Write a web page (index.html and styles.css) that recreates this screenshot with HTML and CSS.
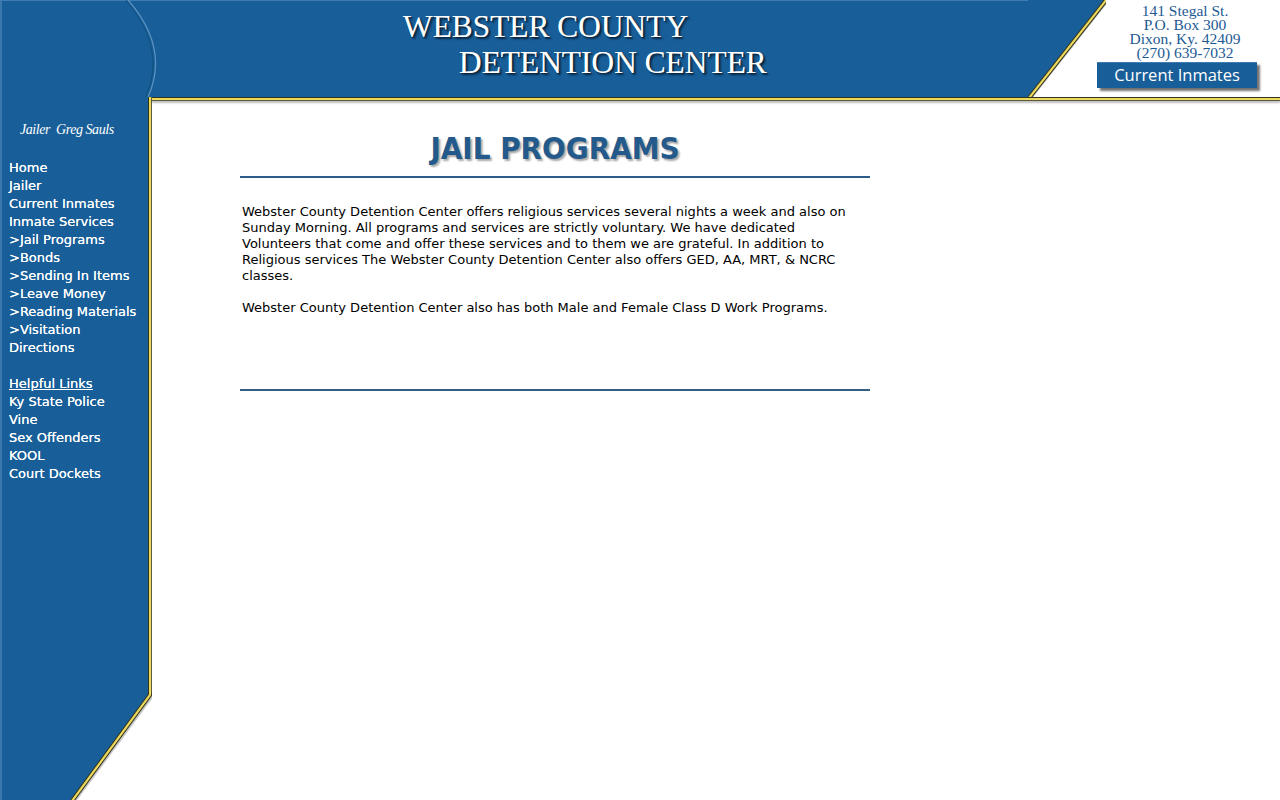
FILE: index.html
```html
<!DOCTYPE html>
<html lang="en">
<head>
<meta charset="utf-8">
<title>Webster County Detention Center - Jail Programs</title>
<link rel="stylesheet" href="styles.css">
</head>
<body>
<div class="page">
  <header class="header">
    <div class="brand">
      <svg class="arc" width="160" height="97" viewBox="0 0 160 97" aria-hidden="true">
        <path d="M128,0 Q170,48 148,97" fill="none" stroke="#5d93c2" stroke-width="1.2"/>
        <path d="M126,0 Q167,48 146,97" fill="none" stroke="#12507f" stroke-width="1"/>
      </svg>
      <h1 class="site-title"><span class="l1">WEBSTER COUNTY</span><span class="l2">DETENTION CENTER</span></h1>
    </div>
    <svg class="slant" width="78" height="97" viewBox="0 0 78 97" aria-hidden="true">
      <polygon points="0,0 79,0 0,98" fill="#185e98"/>
      <line x1="81" y1="-1" x2="3" y2="98" stroke="rgba(0,0,0,0.22)" stroke-width="2.5"/>
      <line x1="79" y1="-1" x2="1" y2="98" stroke="#34331f" stroke-width="4.2"/>
      <line x1="79" y1="-1" x2="1" y2="98" stroke="#ead95d" stroke-width="2.2"/>
    </svg>
    <div class="contact">
      <address class="address"><span class="addr-line">141 Stegal St.</span><span class="addr-line">P.O. Box 300</span><span class="addr-line">Dixon, Ky. 42409</span><span class="addr-line">(270) 639-7032</span></address>
      <a class="btn" href="#">Current Inmates</a>
    </div>
  </header>

  <aside class="sidebar">
    <div class="side-body">
      <div class="jailer">Jailer&nbsp; Greg Sauls</div>
      <nav class="nav">
        <ul>
          <li><a href="#">Home</a></li>
          <li><a href="#">Jailer</a></li>
          <li><a href="#">Current Inmates</a></li>
          <li><a href="#">Inmate Services</a></li>
          <li><a href="#">&gt;Jail Programs</a></li>
          <li><a href="#">&gt;Bonds</a></li>
          <li><a href="#">&gt;Sending In Items</a></li>
          <li><a href="#">&gt;Leave Money</a></li>
          <li><a href="#">&gt;Reading Materials</a></li>
          <li><a href="#">&gt;Visitation</a></li>
          <li><a href="#">Directions</a></li>
          <li class="spacer"></li>
          <li><a class="underline" href="#">Helpful Links</a></li>
          <li><a href="#">Ky State Police</a></li>
          <li><a href="#">Vine</a></li>
          <li><a href="#">Sex Offenders</a></li>
          <li><a href="#">KOOL</a></li>
          <li><a href="#">Court Dockets</a></li>
        </ul>
      </nav>
    </div>
    <svg class="side-foot" width="152" height="107" viewBox="0 0 152 107" aria-hidden="true">
      <polygon points="0,0 150,0 150,2 72,108 0,108" fill="#185e98"/>
      <polygon points="0,0 2,0 2,108 0,108" fill="#3a77ad"/>
      <polyline points="152.5,0 152.5,3 75,108" fill="none" stroke="rgba(0,0,0,0.22)" stroke-width="2.5"/>
      <polyline points="150,-1 150,2 72,108" fill="none" stroke="#34331f" stroke-width="4.2"/>
      <polyline points="150,-1 150,2 72,108" fill="none" stroke="#ead95d" stroke-width="2.2"/>
    </svg>
  </aside>

  <main class="main">
    <div class="topline"></div>
    <section class="content">
      <h2 class="page-title">JAIL PROGRAMS</h2>
      <hr class="rule">
      <p>Webster County Detention Center offers religious services several nights a week and also on Sunday Morning. All programs and services are strictly voluntary. We have dedicated Volunteers that come and offer these services and to them we are grateful. In addition to Religious services The Webster County Detention Center also offers GED, AA, MRT, &amp; NCRC classes.</p>
      <p>Webster County Detention Center also has both Male and Female Class D Work Programs.</p>
      <hr class="rule rule-bottom">
    </section>
  </main>
</div>
</body>
</html>
```

FILE: styles.css
```css
html, body {
  margin: 0;
  padding: 0;
  background: #ffffff;
}

body {
  width: 1280px;
  height: 800px;
  overflow: hidden;
  font-family: "DejaVu Sans", Verdana, sans-serif;
}

.page {
  display: grid;
  grid-template-columns: 152px 1fr;
  grid-template-rows: 97px 703px;
  width: 1280px;
  height: 800px;
}

/* ---------- header ---------- */
.header {
  grid-column: 1 / -1;
  grid-row: 1;
  display: grid;
  grid-template-columns: 1028px 78px 1fr;
  grid-template-rows: 97px;
  background: #ffffff;
}

.brand {
  grid-column: 1;
  grid-row: 1;
  display: flex;
  align-items: flex-start;
  background: #185e98;
  box-shadow: inset 0 1px 0 #3d7bb1, inset 2px 0 0 #3a77ad;
}

.arc {
  flex: none;
  display: block;
}

.site-title {
  margin: 0 0 0 243px;
  padding-top: 9px;
  font-family: "Liberation Serif", "Times New Roman", serif;
  font-weight: normal;
  font-size: 31.4px;
  line-height: 36px;
  color: #ffffff;
  text-shadow: 2px 2px 2px #0a2640, 1px 1px 1px #0d3050, 0 0 0.4px #ffffff;
  white-space: nowrap;
}

.site-title .l1,
.site-title .l2 {
  display: block;
}

.site-title .l2 {
  padding-left: 56px;
}

.slant {
  grid-column: 2;
  grid-row: 1;
  display: block;
}

.contact {
  grid-column: 2 / 4;
  grid-row: 1;
  display: flex;
  flex-direction: column;
  align-items: flex-start;
  padding: 4px 0 0 69px;
}

.address {
  display: flex;
  flex-direction: column;
  align-items: center;
  width: 160px;
  padding-left: 16px;
  box-sizing: border-box;
  font-style: normal;
  font-family: "Liberation Serif", "Times New Roman", serif;
  font-size: 15.5px;
  color: #1c5a93;
  white-space: nowrap;
}

.addr-line {
  display: block;
  height: 14px;
  line-height: 14px;
}

.btn {
  display: block;
  width: 160px;
  height: 26px;
  margin-top: 2px;
  background: #185e98;
  border-top: 1px solid #3c7cb2;
  box-sizing: border-box;
  box-shadow: 3px 3px 2px rgba(0, 0, 0, 0.55);
  color: #ffffff;
  text-decoration: none;
  text-align: center;
  font-family: "Open Sans", "Liberation Sans", sans-serif;
  font-size: 16.5px;
  line-height: 23px;
}

/* ---------- sidebar ---------- */
.sidebar {
  grid-column: 1;
  grid-row: 2;
  display: flex;
  flex-direction: column;
}

.side-body {
  flex: 1;
  background: linear-gradient(to right,
    #3a77ad 0, #3a77ad 2px,
    #185e98 2px, #185e98 148px,
    #34331f 148px, #34331f 149px,
    #ead95d 149px, #ead95d 151px,
    #5d5b40 151px, #5d5b40 152px);
}

.side-foot {
  display: block;
  flex: none;
}

.jailer {
  margin-top: 24px;
  padding-left: 20px;
  font-family: "Liberation Serif", "Times New Roman", serif;
  font-style: italic;
  font-size: 14px;
  line-height: 17px;
  color: #ffffff;
  letter-spacing: -0.45px;
}

.nav ul {
  list-style: none;
  margin: 21px 0 0;
  padding: 0 0 0 9px;
}

.nav li {
  font-size: 13px;
  line-height: 18px;
  height: 18px;
  white-space: nowrap;
}

.nav a {
  color: #ffffff;
  text-decoration: none;
  text-shadow: 0 0 0.5px #ffffff;
}

.nav a.underline {
  text-decoration: underline;
}

/* ---------- main ---------- */
.main {
  grid-column: 2;
  grid-row: 2;
  display: flex;
  flex-direction: column;
}

.topline {
  height: 4px;
  flex: none;
  background: linear-gradient(to bottom,
    #34331f 0, #34331f 1px,
    #ead95d 1px, #ead95d 3px,
    #5d5b40 3px, #5d5b40 4px);
  box-shadow: 0 2px 2px rgba(0, 0, 0, 0.25);
}

.content {
  width: 630px;
  margin-left: 88px;
}

.page-title {
  margin: 29px 0 10px;
  text-align: center;
  font-family: "DejaVu Sans Condensed", "DejaVu Sans", sans-serif;
  font-stretch: condensed;
  font-weight: bold;
  font-size: 31px;
  line-height: 36px;
  color: #235a8b;
  text-shadow: 2px 2px 2px rgba(0, 0, 0, 0.35);
}

.rule {
  display: block;
  height: 2px;
  margin: 0;
  border: 0;
  background: #2a5d8c;
}

.content p {
  margin: 26px 2px 0;
  font-family: "DejaVu Sans", Verdana, sans-serif;
  font-size: 13px;
  line-height: 16px;
  color: #000000;
}

.content p + p {
  margin-top: 16px;
}

.rule-bottom {
  margin-top: 73px;
  background: #355f82;
}
```
